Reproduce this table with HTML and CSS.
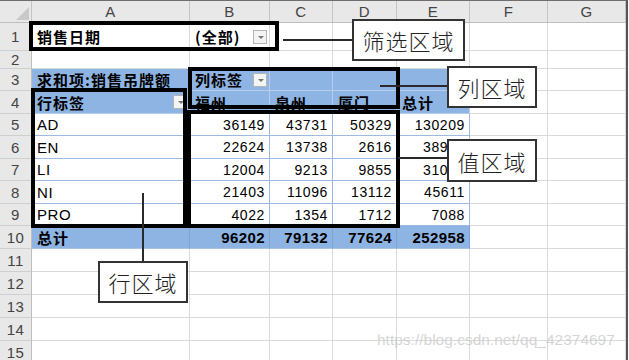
FILE: index.html
```html
<!DOCTYPE html>
<html lang="zh">
<head>
<meta charset="utf-8">
<link rel="stylesheet" href="styles.css">
</head>
<body>
<div class="sheet">
  <div class="grid">
    <div class="hd corner"><svg width="16" height="16" viewBox="0 0 16 16"><polygon points="15,2 15,15 2,15" fill="#c9c9c9"/></svg></div>
    <div class="hd">A</div><div class="hd">B</div><div class="hd">C</div><div class="hd">D</div><div class="hd">E</div><div class="hd">F</div><div class="hd">G</div>

    <div class="rh">1</div>
    <div class="c cn b">销售日期</div>
    <div class="c cn b dd-cell">(全部)<span class="dd"></span></div>
    <div class="c"></div><div class="c"></div><div class="c"></div><div class="c"></div><div class="c"></div>

    <div class="rh">2</div>
    <div class="c"></div><div class="c"></div><div class="c"></div><div class="c"></div><div class="c"></div><div class="c"></div><div class="c"></div>

    <div class="rh">3</div>
    <div class="c blue cn b">求和项:销售吊牌额</div>
    <div class="c blue cn b dd-cell">列标签<span class="dd"></span></div>
    <div class="c blue"></div><div class="c blue"></div><div class="c blue"></div>
    <div class="c"></div><div class="c"></div>

    <div class="rh">4</div>
    <div class="c blue cn b dd-cell">行标签<span class="dd"></span></div>
    <div class="c blue cn b">福州</div>
    <div class="c blue cn b">泉州</div>
    <div class="c blue cn b">厦门</div>
    <div class="c blue cn b">总计</div>
    <div class="c"></div><div class="c"></div>

    <div class="rh">5</div>
    <div class="c d lat">AD</div><div class="c d num">36149</div><div class="c d num">43731</div><div class="c d num">50329</div><div class="c d num">130209</div>
    <div class="c"></div><div class="c"></div>

    <div class="rh">6</div>
    <div class="c d lat">EN</div><div class="c d num">22624</div><div class="c d num">13738</div><div class="c d num">2616</div><div class="c d num">38978</div>
    <div class="c"></div><div class="c"></div>

    <div class="rh">7</div>
    <div class="c d lat">LI</div><div class="c d num">12004</div><div class="c d num">9213</div><div class="c d num">9855</div><div class="c d num">31072</div>
    <div class="c"></div><div class="c"></div>

    <div class="rh">8</div>
    <div class="c d lat">NI</div><div class="c d num">21403</div><div class="c d num">11096</div><div class="c d num">13112</div><div class="c d num">45611</div>
    <div class="c"></div><div class="c"></div>

    <div class="rh">9</div>
    <div class="c d lat">PRO</div><div class="c d num">4022</div><div class="c d num">1354</div><div class="c d num">1712</div><div class="c d num">7088</div>
    <div class="c"></div><div class="c"></div>

    <div class="rh">10</div>
    <div class="c blue tot cn b">总计</div>
    <div class="c blue tot num b">96202</div><div class="c blue tot num b">79132</div><div class="c blue tot num b">77624</div><div class="c blue tot num b">252958</div>
    <div class="c"></div><div class="c"></div>

    <div class="rh">11</div>
    <div class="c"></div><div class="c"></div><div class="c"></div><div class="c"></div><div class="c"></div><div class="c"></div><div class="c"></div>
    <div class="rh">12</div>
    <div class="c"></div><div class="c"></div><div class="c"></div><div class="c"></div><div class="c"></div><div class="c"></div><div class="c"></div>
    <div class="rh">13</div>
    <div class="c"></div><div class="c"></div><div class="c"></div><div class="c"></div><div class="c"></div><div class="c"></div><div class="c"></div>
    <div class="rh">14</div>
    <div class="c"></div><div class="c"></div><div class="c"></div><div class="c"></div><div class="c"></div><div class="c"></div><div class="c"></div>
    <div class="rh">15</div>
    <div class="c"></div><div class="c"></div><div class="c"></div><div class="c"></div><div class="c"></div><div class="c"></div><div class="c"></div>
  </div>

  <div class="frame f-filter"></div>
  <div class="frame f-col"></div>
  <div class="frame f-val"></div>
  <div class="frame f-row"></div>

  <div class="hline l-filter"></div>
  <div class="hline l-col"></div>
  <div class="hline l-val"></div>
  <div class="vline l-row"></div>

  <div class="callout co-filter">筛选区域</div>
  <div class="callout co-col">列区域</div>
  <div class="callout co-val">值区域</div>
  <div class="callout co-row">行区域</div>

  <div class="watermark">https://blog.csdn.net/qq_42374697</div>
</div>
</body>
</html>
```

FILE: styles.css
```css
* { box-sizing: border-box; }
html, body { margin: 0; padding: 0; background: #ffffff; }
body { width: 629px; height: 360px; overflow: hidden; }

.sheet {
  position: relative;
  width: 629px;
  height: 360px;
  background: #ffffff;
  font-family: "Liberation Sans", Arial, "Noto Sans CJK SC", sans-serif;
  color: #000;
  overflow: hidden;
}

.grid {
  display: grid;
  width: 628px;
  grid-template-columns: 32px 158px 80px 63px 64px 73px 78px 78px;
  grid-template-rows: 22px 28px 18px 22px 23px 22px 23px 22px 23px 22px 23px 23px 23px 23px 23px 23px;
  border-top: 1px solid #6e6e6e;
  border-right: 2px solid #555;
}

.hd {
  background: #e8e8e8;
  border-right: 1px solid #c4c4c4;
  border-bottom: 1px solid #bdbdbd;
  color: #444;
  font-size: 15px;
  display: flex;
  align-items: center;
  justify-content: center;
  letter-spacing: 0.5px;
}
.corner { justify-content: flex-end; align-items: flex-end; padding: 0 1px 1px 0; }

.rh {
  background: #e8e8e8;
  border-right: 1px solid #bdbdbd;
  border-bottom: 1px solid #cfcfcf;
  color: #444;
  font-size: 15px;
  display: flex;
  align-items: center;
  justify-content: center;
  letter-spacing: 0.5px;
}

.c {
  border-right: 1px solid #dadada;
  border-bottom: 1px solid #dadada;
  display: flex;
  align-items: center;
  padding: 0 4px 0 5px;
  white-space: nowrap;
  overflow: hidden;
  font-size: 14px;
  letter-spacing: 0.6px;
}

.cn {
  font-family: "Noto Sans CJK SC", "Liberation Sans", sans-serif;
  font-size: 15px;
  letter-spacing: 1px;
}
.b { font-weight: 700; }

.blue {
  background: #8eb4e3;
  border-right-color: #b7cdea;
  border-bottom-color: #b7cdea;
}
.tot {
  border-right-color: #7fa3d3;
  border-bottom-color: #a9c3e6;
}

.d {
  border-right-color: #9dbbe2;
  border-bottom-color: #9dbbe2;
}
.lat { font-size: 15px; }
.num { justify-content: flex-end; font-size: 14px; }
.num.b { font-family: "Liberation Sans", Arial, sans-serif; font-size: 15px; letter-spacing: 0.4px; }

.dd-cell { justify-content: space-between; padding-right: 2px; }
.dd {
  width: 14px;
  height: 14px;
  border: 1px solid #b4b4b4;
  background: #f4f4f4;
  position: relative;
  flex: none;
}
.dd::after {
  content: "";
  position: absolute;
  left: 4px;
  top: 5px;
  border-left: 3px solid transparent;
  border-right: 3px solid transparent;
  border-top: 3px solid #777;
}

.frame {
  position: absolute;
  border: 4px solid #000;
}
.f-filter { left: 29px; top: 21px; width: 250px; height: 30px; }
.f-col { left: 188px; top: 67px; width: 212px; height: 42px; }
.f-val { left: 187px; top: 110px; width: 213px; height: 118px; }
.f-row { left: 31px; top: 88px; width: 156px; height: 140px; }

.hline { position: absolute; height: 2px; background: #2a2a2a; }
.vline { position: absolute; width: 2px; background: #2a2a2a; }
.l-filter { left: 283px; top: 39px; width: 69px; }
.l-col { left: 380px; top: 85px; width: 67px; }
.l-val { left: 398px; top: 157px; width: 49px; }
.l-row { left: 142px; top: 193px; height: 68px; }

.callout {
  position: absolute;
  background: #fff;
  border: 2px solid #333;
  font-family: "Noto Sans CJK SC", sans-serif;
  font-weight: 300;
  font-size: 22px;
  letter-spacing: 1px;
  color: #222;
  display: flex;
  align-items: center;
  justify-content: center;
}
.co-filter { left: 352px; top: 19px; width: 113px; height: 42px; }
.co-col { left: 447px; top: 66px; width: 90px; height: 42px; }
.co-val { left: 447px; top: 139px; width: 90px; height: 43px; }
.co-row { left: 98px; top: 261px; width: 90px; height: 42px; }

.watermark {
  position: absolute;
  left: 377px;
  top: 331px;
  font-family: "Liberation Sans", Arial, sans-serif;
  font-size: 15.5px;
  color: rgba(200, 200, 200, 0.75);
  letter-spacing: 0;
}
```
